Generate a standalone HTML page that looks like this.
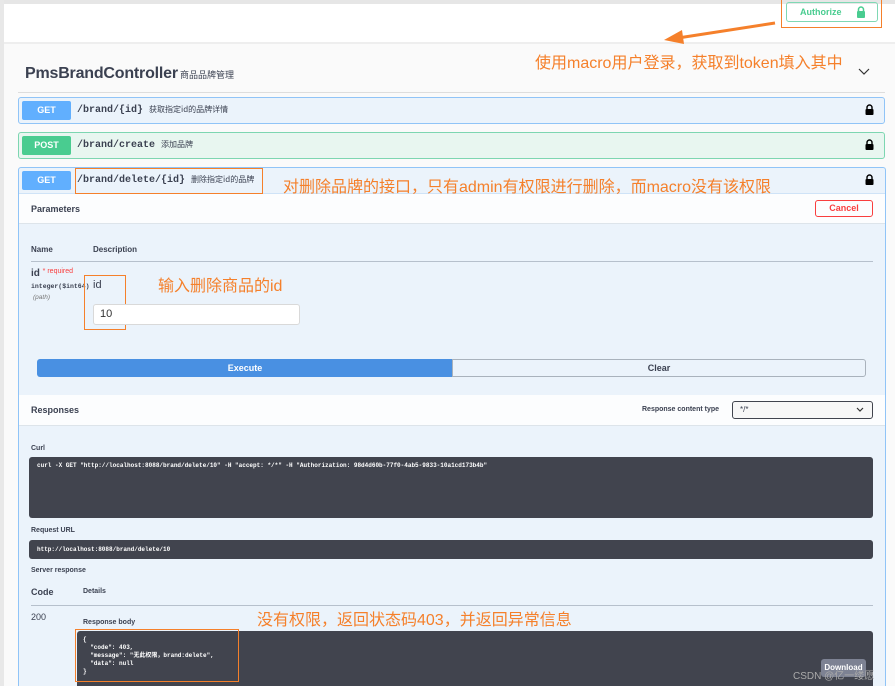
<!DOCTYPE html>
<html style="width:895px;height:686px;overflow:hidden"><head><meta charset="utf-8"><style>
*{margin:0;padding:0;box-sizing:border-box}
body{width:895px;height:686px;overflow:hidden;background:#fafafa;font-family:"Liberation Sans","Noto Sans CJK SC",sans-serif;position:relative;color:#3b4151}
.a{position:absolute}
.mono{font-family:"Liberation Mono","Noto Sans CJK SC",monospace;font-weight:bold}
.or{color:#f5802b;font-size:16px;white-space:nowrap;font-family:"Liberation Sans","Noto Sans CJK SC",sans-serif}
.ob{border:1.5px solid #f5802b}
.b{font-weight:bold}
.lock{position:absolute;width:9px;height:11px}
</style></head><body>
<div class="a" style="left:0;top:0;width:4px;height:686px;background:#e8e8e8"></div>
<div class="a" style="left:4px;top:0;width:891px;height:42px;background:#fff;border-top:4px solid #e6e6e6"></div>
<div class="a" style="left:4px;top:42px;width:891px;height:2px;background:#eee"></div>
<!-- authorize -->
<div class="a ob" style="left:781px;top:0;width:101px;height:28px;border-top:none"></div>
<div class="a" style="left:786px;top:2px;width:92px;height:20px;border:1.5px solid #7fd8b4;border-radius:3px;font-size:9px;color:#49cc90;font-weight:bold;padding:4px 0 0 13px">Authorize</div>
<svg class="a" style="left:856px;top:6px" width="10" height="12" viewBox="0 0 10 12"><path d="M2.5 5V3.5a2.5 2.5 0 0 1 5 0V5" fill="none" stroke="#49cc90" stroke-width="1.5"/><rect x="1" y="5" width="8" height="7" rx="1" fill="#49cc90"/></svg>
<svg class="a" style="left:660px;top:20px" width="120" height="26"><line x1="115" y1="3" x2="18" y2="18" stroke="#f5802b" stroke-width="3"/><path d="M4 20 L22 10 L24 24Z" fill="#f5802b"/></svg>
<div class="a or" style="left:535px;top:49px">使用macro用户登录，获取到token填入其中</div>
<div class="a" style="left:25px;top:65px;font-size:16px;font-weight:bold;color:#3b4151;letter-spacing:-0.2px">PmsBrandController</div>
<div class="a" style="left:180px;top:68px;font-size:9px">商品品牌管理</div>
<svg class="a" style="left:858px;top:68px" width="12" height="8"><path d="M1 1l5 5 5-5" fill="none" stroke="#333" stroke-width="1.2"/></svg>
<div class="a" style="left:18px;top:92px;width:867px;height:1px;background:#ddd"></div>
<!-- rows -->
<div class="a" style="left:18px;top:97px;width:867px;height:27px;background:#ebf3fb;border:1px solid #90c4f7;border-radius:3px"></div>
<div class="a b" style="left:22px;top:101px;width:49px;height:19px;background:#61affe;border-radius:2px;color:#fff;font-size:9px;text-align:center;line-height:19px">GET</div>
<div class="a mono" style="left:77px;top:104px;font-size:10px">/brand/{id} <span style="font-family:'Noto Sans CJK SC';font-weight:normal;font-size:8px">获取指定id的品牌详情</span></div>
<svg class="lock" style="left:865px;top:104px" viewBox="0 0 9 11"><path d="M2 5V3.5a2.5 2.5 0 0 1 5 0V5" fill="none" stroke="#000" stroke-width="1.4"/><rect x="0.5" y="5" width="8" height="6" rx="1"/></svg>
<div class="a" style="left:18px;top:132px;width:867px;height:27px;background:#e8f6f0;border:1px solid #7dd6b1;border-radius:3px"></div>
<div class="a b" style="left:22px;top:136px;width:49px;height:19px;background:#49cc90;border-radius:2px;color:#fff;font-size:9px;text-align:center;line-height:19px">POST</div>
<div class="a mono" style="left:77px;top:139px;font-size:10px">/brand/create <span style="font-family:'Noto Sans CJK SC';font-weight:normal;font-size:8px">添加品牌</span></div>
<svg class="lock" style="left:865px;top:139px" viewBox="0 0 9 11"><path d="M2 5V3.5a2.5 2.5 0 0 1 5 0V5" fill="none" stroke="#000" stroke-width="1.4"/><rect x="0.5" y="5" width="8" height="6" rx="1"/></svg>
<!-- delete block -->
<div class="a" style="left:18px;top:167px;width:868px;height:519px;background:#ebf3fb;border:1px solid #90c4f7;border-bottom:none;border-radius:3px 3px 0 0"></div>
<div class="a b" style="left:22px;top:171px;width:49px;height:19px;background:#61affe;border-radius:2px;color:#fff;font-size:9px;text-align:center;line-height:19px">GET</div>
<div class="a" style="left:19px;top:193px;width:866px;height:31px;background:#fcfdfe;border-top:1px solid #cfe3f7;border-bottom:1px solid #dde4ea"></div>
<div class="a ob" style="left:75px;top:168px;width:188px;height:26px"></div>
<div class="a mono" style="left:77px;top:174px;font-size:10px">/brand/delete/{id} <span style="font-family:'Noto Sans CJK SC';font-weight:normal;font-size:8px">删除指定id的品牌</span></div>
<div class="a or" style="left:283px;top:173px">对删除品牌的接口，只有admin有权限进行删除，而macro没有该权限</div>
<svg class="lock" style="left:865px;top:174px" viewBox="0 0 9 11"><path d="M2 5V3.5a2.5 2.5 0 0 1 5 0V5" fill="none" stroke="#000" stroke-width="1.4"/><rect x="0.5" y="5" width="8" height="6" rx="1"/></svg>
<div class="a b" style="left:31px;top:204px;font-size:9px">Parameters</div>
<div class="a b" style="left:815px;top:200px;width:58px;height:17px;border:1px solid #f93e3e;border-radius:3px;color:#f93e3e;font-size:9px;text-align:center;line-height:15px">Cancel</div>
<div class="a b" style="left:31px;top:245px;font-size:8px">Name</div>
<div class="a b" style="left:93px;top:245px;font-size:8px">Description</div>
<div class="a" style="left:31px;top:261px;width:842px;height:1px;background:#b6c0cc"></div>
<div class="a b" style="left:31px;top:268px;font-size:10px">id <span style="color:#f93e3e;font-size:7px;font-weight:normal;position:relative;top:-3px">* required</span></div>
<div class="a mono" style="left:31px;top:283px;font-size:6.5px">integer($int64)</div>
<div class="a" style="left:33px;top:294px;font-size:6.5px;font-style:italic;color:#777">(path)</div>
<div class="a ob" style="left:84px;top:275px;width:42px;height:55px"></div>
<div class="a" style="left:93px;top:279px;font-size:11px">id</div>
<div class="a" style="left:93px;top:304px;width:207px;height:21px;background:#fff;border:1px solid #d9d9d9;border-radius:3px;font-size:11px;padding:3px 0 0 6px;color:#333">10</div>
<div class="a or" style="left:158px;top:272px">输入删除商品的id</div>
<div class="a b" style="left:37px;top:359px;width:416px;height:18px;background:#4990e2;border-radius:3px 0 0 3px;color:#fff;font-size:9px;text-align:center;line-height:18px">Execute</div>
<div class="a b" style="left:452px;top:359px;width:414px;height:18px;border:1px solid #a9b2bc;border-radius:0 3px 3px 0;font-size:9px;text-align:center;line-height:16px">Clear</div>
<div class="a" style="left:19px;top:395px;width:866px;height:31px;background:#fcfdfe;border-bottom:1px solid #dde4ea"></div>
<div class="a b" style="left:31px;top:405px;font-size:9px">Responses</div>
<div class="a b" style="left:642px;top:406px;font-size:7px">Response content type</div>
<div class="a" style="left:732px;top:401px;width:141px;height:18px;background:#f7f7f7;border:1px solid #41444e;border-radius:3px;font-size:8px;padding:3px 0 0 7px">*/*</div>
<svg class="a" style="left:856px;top:407px" width="8" height="6"><path d="M1 1l3 3 3-3" fill="none" stroke="#333" stroke-width="1.2"/></svg>
<div class="a b" style="left:31px;top:445px;font-size:7px">Curl</div>
<div class="a" style="left:29px;top:457px;width:844px;height:61px;background:#41444e;border-radius:3px"></div>
<div class="a mono" style="left:37px;top:462px;font-size:6px;color:#fff;white-space:nowrap">curl -X GET "http://localhost:8088/brand/delete/10" -H "accept: */*" -H "Authorization: 98d4d60b-77f0-4ab5-9833-10a1cd173b4b"</div>
<div class="a b" style="left:31px;top:527px;font-size:7px">Request URL</div>
<div class="a" style="left:29px;top:540px;width:844px;height:19px;background:#41444e;border-radius:3px"></div>
<div class="a mono" style="left:37px;top:546px;font-size:6px;color:#fff">http://localhost:8088/brand/delete/10</div>
<div class="a b" style="left:31px;top:567px;font-size:7px">Server response</div>
<div class="a b" style="left:31px;top:587px;font-size:9px">Code</div>
<div class="a b" style="left:83px;top:588px;font-size:7px">Details</div>
<div class="a" style="left:31px;top:605px;width:842px;height:1px;background:#b6c0cc"></div>
<div class="a" style="left:31px;top:612px;font-size:9px">200</div>
<div class="a b" style="left:83px;top:619px;font-size:7px">Response body</div>
<div class="a or" style="left:257px;top:606px">没有权限，返回状态码403，并返回异常信息</div>
<div class="a" style="left:77px;top:631px;width:796px;height:55px;background:#41444e;border-radius:3px 3px 0 0"></div>
<div class="a ob" style="left:75px;top:629px;width:164px;height:53px"></div>
<div class="a mono" style="left:83px;top:636px;font-size:6px;color:#fff;line-height:8px;white-space:pre">{
  "code": 403,
  "message": "无此权限，brand:delete",
  "data": null
}</div>
<div class="a b" style="left:821px;top:659px;width:45px;height:18px;background:#7d8293;border-radius:3px;color:#fff;font-size:8px;text-align:center;line-height:18px">Download</div>
<div class="a" style="left:793px;top:667px;font-size:10px;color:#aaa">CSDN @亿一缕愿</div>
</body></html>
